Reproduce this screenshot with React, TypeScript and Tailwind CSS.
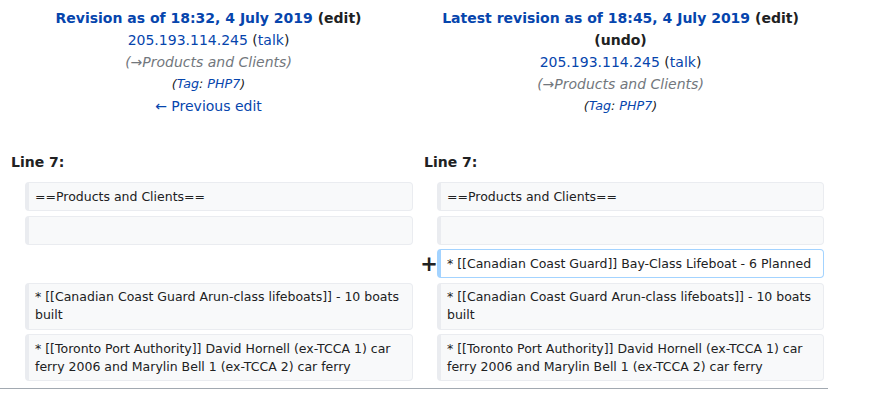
import React from "react";

const ctx =
  "bg-[#f8f9fa] border border-[#eaecf0] border-l-[4px] rounded-[4px] px-[6px] py-[4.5px] text-[12.5px] leading-[18px] text-[#202122] min-h-[29px]";
const add =
  "bg-white border border-[#a3d3ff] border-l-[4px] rounded-[4px] px-[6px] py-[4.5px] text-[12.5px] leading-[18px] text-[#202122] min-h-[29px]";

function Ctx({ children }: { children?: React.ReactNode }) {
  return (
    <>
      <div />
      <div className={ctx}>{children}</div>
      <div />
      <div className={ctx}>{children}</div>
    </>
  );
}

export default function App() {
  return (
    <div className="w-[874px] h-[404px] bg-white font-['DejaVu_Sans',sans-serif] text-[#202122] overflow-hidden">
      <div className="w-[828px]">
        <div className="grid grid-cols-[413px_415px] pt-[7px] text-[14px] leading-[22px]">
          <div className="text-center pl-[4px]">
            <div className="font-bold">
              <span className="text-[#0645ad]">Revision as of 18:32, 4 July 2019</span>{" "}
              <span>(edit)</span>
            </div>
            <div>
              <span className="text-[#0645ad]">205.193.114.245</span> (
              <span className="text-[#0645ad]">talk</span>)
            </div>
            <div className="italic text-[#72777d]">(→Products and Clients)</div>
            <div className="italic text-[12.7px]">
              (<span className="text-[#0645ad]">Tag</span>:{" "}
              <span className="text-[#0645ad]">PHP7</span>)
            </div>
            <div className="text-[#0645ad]">← Previous edit</div>
          </div>
          <div className="text-center">
            <div className="font-bold px-[20px]">
              <span className="text-[#0645ad]">Latest revision as of 18:45, 4 July 2019</span>{" "}
              <span>(edit)</span> <span>(undo)</span>
            </div>
            <div>
              <span className="text-[#0645ad]">205.193.114.245</span> (
              <span className="text-[#0645ad]">talk</span>)
            </div>
            <div className="italic text-[#72777d]">(→Products and Clients)</div>
            <div className="italic text-[12.7px]">
              (<span className="text-[#0645ad]">Tag</span>:{" "}
              <span className="text-[#0645ad]">PHP7</span>)
            </div>
          </div>
        </div>

        <div className="grid grid-cols-[25px_388px_24px_387px] gap-y-[4.5px] mt-[34px]">
          <div className="col-span-2 pl-[11px] font-bold text-[14px] leading-[22px] mb-[4.5px]">Line 7:</div>
          <div className="col-span-2 pl-[11px] font-bold text-[14px] leading-[22px] mb-[4.5px]">Line 7:</div>

          <Ctx>==Products and Clients==</Ctx>
          <Ctx />

          <div className="col-span-2" />
          <div className="flex items-center justify-center pl-[8px] font-bold text-[21px] leading-[18px]">+</div>
          <div className={add}>* [[Canadian Coast Guard]] Bay-Class Lifeboat - 6 Planned</div>

          <Ctx>* [[Canadian Coast Guard Arun-class lifeboats]] - 10 boats built</Ctx>
          <Ctx>* [[Toronto Port Authority]] David Hornell (ex-TCCA 1) car ferry 2006 and Marylin Bell 1 (ex-TCCA 2) car ferry</Ctx>
        </div>
        <div className="mt-[7px] h-px bg-[#a2a9b1]" />
      </div>
    </div>
  );
}
